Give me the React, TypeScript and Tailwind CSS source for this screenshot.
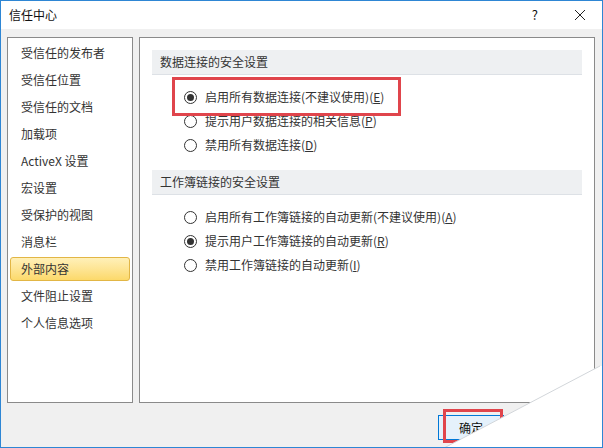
const navItems = [
  "受信任的发布者",
  "受信任位置",
  "受信任的文档",
  "加载项",
  "ActiveX 设置",
  "宏设置",
  "受保护的视图",
  "消息栏",
  "外部内容",
  "文件阻止设置",
  "个人信息选项",
];

const dataOptions = [
  { label: "启用所有数据连接(不建议使用)", key: "E", checked: true },
  { label: "提示用户数据连接的相关信息", key: "P", checked: false },
  { label: "禁用所有数据连接", key: "D", checked: false },
];

const linkOptions = [
  { label: "启用所有工作簿链接的自动更新(不建议使用)", key: "A", checked: false },
  { label: "提示用户工作簿链接的自动更新", key: "R", checked: true },
  { label: "禁用工作簿链接的自动更新", key: "I", checked: false },
];

function Radio({ checked }: { checked: boolean }) {
  return (
    <span className="flex h-[13px] w-[13px] items-center justify-center rounded-full border border-[#333] bg-white">
      {checked && <span className="h-[7px] w-[7px] rounded-full bg-[#333]" />}
    </span>
  );
}

function Option({ label, hotkey, checked }: { label: string; hotkey: string; checked: boolean }) {
  return (
    <div className="flex h-[24px] items-center gap-[8px] pl-[44px]">
      <Radio checked={checked} />
      <span>
        {label}(<span className="underline">{hotkey}</span>)
      </span>
    </div>
  );
}

function SectionHeader({ title }: { title: string }) {
  return (
    <div className="mx-[12px] flex h-[25px] items-center border-b border-[#dde1e6] bg-[#eef0f2] pl-[8px]">
      {title}
    </div>
  );
}

export default function App() {
  return (
    <div
      className="relative h-[448px] w-[603px] overflow-hidden border border-[#2e86d4] bg-[#f0f0f0] text-[12px] text-[#333]"
      style={{ fontFamily: '"Noto Sans CJK SC", "Noto Sans", sans-serif' }}
    >
      {/* title bar */}
      <div className="flex h-[28px] items-center bg-white pl-[8px] pr-[16px] text-[#111]">
        <span className="flex-1">信任中心</span>
        <span className="mr-[36px] text-[13px]">?</span>
        <svg width="12" height="12" viewBox="0 0 12 12" className="text-[#222]">
          <path d="M1 1L11 11M11 1L1 11" stroke="currentColor" strokeWidth="1" />
        </svg>
      </div>

      {/* body */}
      <div className="flex h-[374px] gap-[6px] pl-[6px] pr-[7px] pt-[8px]">
        <div className="w-[126px] border border-[#8a8a8a] bg-white pt-[1px]">
          {navItems.map((item) =>
            item === "外部内容" ? (
              <div key={item} className="flex h-[27px] items-center px-[2px]">
                <div className="flex h-[24px] w-full items-center rounded-[3px] border border-[#e2b645] bg-gradient-to-b from-[#fff0b8] to-[#fcd96a] pl-[10px]">
                  {item}
                </div>
              </div>
            ) : (
              <div key={item} className="flex h-[27px] items-center pl-[13px]">
                {item}
              </div>
            )
          )}
        </div>

        <div className="flex-1 border border-[#8a8a8a] bg-white pt-[12px]">
          <SectionHeader title="数据连接的安全设置" />
          <div className="pb-[13px] pt-[10px]">
            {dataOptions.map((o) => (
              <Option key={o.key} label={o.label} hotkey={o.key} checked={o.checked} />
            ))}
          </div>
          <SectionHeader title="工作簿链接的安全设置" />
          <div className="pt-[10px]">
            {linkOptions.map((o) => (
              <Option key={o.key} label={o.label} hotkey={o.key} checked={o.checked} />
            ))}
          </div>
        </div>
      </div>

      {/* buttons */}
      <div className="flex pl-[437px] pt-[12px]">
        <div className="flex h-[25px] w-[66px] items-center justify-center border border-[#0078d7] bg-[#e5f1fb] text-[#111]">
          确定
        </div>
      </div>

      {/* red highlight annotations */}
      <div className="absolute left-[171px] top-[76px] h-[39px] w-[229px] border-[3px] border-[#e0454c]" />
      <div className="absolute left-[442px] top-[408px] h-[34px] w-[60px] border-[3px] border-[#e0454c]" />

      {/* page curl */}
      <svg className="absolute left-[-1px] top-[-1px]" width="603" height="448" viewBox="0 0 603 448">
        <defs>
          <linearGradient id="curl" x1="0" y1="0" x2="1" y2="0.6">
            <stop offset="0" stopColor="#dfe9f3" stopOpacity="0.9" />
            <stop offset="0.25" stopColor="#ffffff" />
            <stop offset="1" stopColor="#ffffff" />
          </linearGradient>
        </defs>
        <polygon points="444,448 600,366 603,366 603,448" fill="url(#curl)" />
        <line x1="444" y1="448" x2="600" y2="366" stroke="#d2d6da" strokeWidth="1" />
      </svg>
    </div>
  );
}
